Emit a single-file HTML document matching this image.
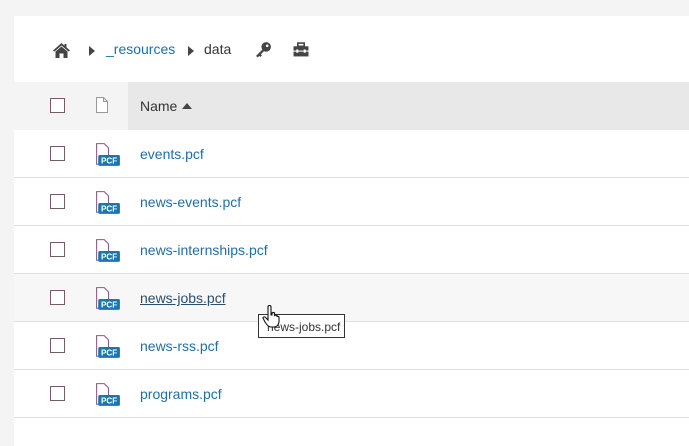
<!DOCTYPE html>
<html><head><style>
body{margin:0;background:#f4f4f4;font-family:"Liberation Sans",sans-serif;width:689px;height:435px;overflow:hidden;position:relative}
.card{position:absolute;left:14px;top:16px;width:700px;height:430px;background:#fff}
.bc{position:absolute;top:29px;left:38px;font-size:14px;color:#333;height:18px}
.bc *{position:absolute;white-space:nowrap}
.hdr{position:absolute;left:0;top:66px;width:700px;height:48px;background:#f4f4f4}
.hdr .n{position:absolute;left:114px;top:0;right:0;height:48px;background:#e8e8e8}
.row{position:absolute;left:0;width:700px;height:47px;border-bottom:1px solid #e0e0e0}
.cb{position:absolute;left:36px;top:16px;width:13px;height:13px;border:1px solid #7a5a6a;background:#fff}
.lnk{position:absolute;left:126px;top:16px;font-size:14px;color:#1f6fa3}
.ic{position:absolute;left:81px;top:13px}
</style></head><body>
<div class="card">
<div class="bc">
<svg style="left:0;top:-3px" width="19" height="17" viewBox="0 0 19 17"><path d="M9.5 1 L1 8.5 L2.5 9.5 L9.5 3.5 L16.5 9.5 L18 8.5 L14.5 5.4 V2 H12.5 V3.7Z M3.5 9.5 V16 H7.5 V11.5 H11.5 V16 H15.5 V9.5 L9.5 4.5Z" fill="#444"/></svg>
<svg style="left:37px;top:1px" width="6" height="10"><path d="M0 0 L6 5 L0 10Z" fill="#444"/></svg>
<span style="left:54px;top:-4px;color:#1f6fa3">_resources</span>
<svg style="left:136px;top:1px" width="6" height="10"><path d="M0 0 L6 5 L0 10Z" fill="#444"/></svg>
<span style="left:152px;top:-4px">data</span>
<svg style="left:203px;top:-4px" width="17" height="17" viewBox="0 0 16 16"><circle cx="10.5" cy="5.5" r="4.5" fill="#444"/><path d="M8 7 L1 14 L2.5 15.5 L4 14 L5 15 L6.5 13.5 L5.5 12.5 L10 8Z" fill="#444"/><circle cx="11.5" cy="4.5" r="1.2" fill="#fff"/></svg>
<svg style="left:241px;top:-3px" width="16" height="15" viewBox="0 0 15 14"><rect x="4.5" y="1" width="6" height="3" fill="none" stroke="#444" stroke-width="1.5"/><rect x="0.5" y="4" width="14" height="4" fill="#444"/><rect x="0.5" y="9" width="14" height="4.5" fill="#444"/><rect x="3" y="7" width="2" height="3" fill="#fff"/><rect x="10" y="7" width="2" height="3" fill="#fff"/></svg>
</div>
<div class="hdr"><div class="n"></div>
<div class="cb" style="top:16px"></div>
<svg style="position:absolute;left:82px;top:15px" width="12" height="16" viewBox="0 0 12 16"><path d="M0.5 0.5 H7.5 L11.5 4.5 V15.5 H0.5Z M7.5 0.5 V4.5 H11.5" fill="#fff" stroke="#999"/></svg>
<span style="position:absolute;left:126px;top:16px;font-size:14px;color:#333">Name</span>
<svg style="position:absolute;left:168px;top:21px" width="10" height="6"><path d="M0 6 L5 0 L10 6Z" fill="#444"/></svg>
</div>
</div>
<div style="position:absolute;left:14px;top:130px">
<div class="row" style="top:0"><div class="cb"></div><svg class="ic" width="26" height="24" viewBox="0 0 24 22"><path d="M1.5 0.5 H8.5 L12.5 4.5 V19.5 H1.5Z" fill="#fff" stroke="#8a5a8a"/><rect x="3" y="11" width="20" height="10" rx="1.5" fill="#1877b3"/><text x="13" y="19" font-size="7.5" font-weight="bold" fill="#fff" text-anchor="middle" font-family="Liberation Sans">PCF</text></svg><span class="lnk">events.pcf</span></div>
<div class="row" style="top:48px"><div class="cb"></div><svg class="ic" width="26" height="24" viewBox="0 0 24 22"><path d="M1.5 0.5 H8.5 L12.5 4.5 V19.5 H1.5Z" fill="#fff" stroke="#8a5a8a"/><rect x="3" y="11" width="20" height="10" rx="1.5" fill="#1877b3"/><text x="13" y="19" font-size="7.5" font-weight="bold" fill="#fff" text-anchor="middle" font-family="Liberation Sans">PCF</text></svg><span class="lnk">news-events.pcf</span></div>
<div class="row" style="top:96px"><div class="cb"></div><svg class="ic" width="26" height="24" viewBox="0 0 24 22"><path d="M1.5 0.5 H8.5 L12.5 4.5 V19.5 H1.5Z" fill="#fff" stroke="#8a5a8a"/><rect x="3" y="11" width="20" height="10" rx="1.5" fill="#1877b3"/><text x="13" y="19" font-size="7.5" font-weight="bold" fill="#fff" text-anchor="middle" font-family="Liberation Sans">PCF</text></svg><span class="lnk">news-internships.pcf</span></div>
<div class="row" style="top:144px;background:#f7f7f7"><div class="cb"></div><svg class="ic" width="26" height="24" viewBox="0 0 24 22"><path d="M1.5 0.5 H8.5 L12.5 4.5 V19.5 H1.5Z" fill="#fff" stroke="#8a5a8a"/><rect x="3" y="11" width="20" height="10" rx="1.5" fill="#1877b3"/><text x="13" y="19" font-size="7.5" font-weight="bold" fill="#fff" text-anchor="middle" font-family="Liberation Sans">PCF</text></svg><span class="lnk" style="color:#2a4f6e;text-decoration:underline">news-jobs.pcf</span></div>
<div class="row" style="top:192px"><div class="cb"></div><svg class="ic" width="26" height="24" viewBox="0 0 24 22"><path d="M1.5 0.5 H8.5 L12.5 4.5 V19.5 H1.5Z" fill="#fff" stroke="#8a5a8a"/><rect x="3" y="11" width="20" height="10" rx="1.5" fill="#1877b3"/><text x="13" y="19" font-size="7.5" font-weight="bold" fill="#fff" text-anchor="middle" font-family="Liberation Sans">PCF</text></svg><span class="lnk">news-rss.pcf</span></div>
<div class="row" style="top:240px"><div class="cb"></div><svg class="ic" width="26" height="24" viewBox="0 0 24 22"><path d="M1.5 0.5 H8.5 L12.5 4.5 V19.5 H1.5Z" fill="#fff" stroke="#8a5a8a"/><rect x="3" y="11" width="20" height="10" rx="1.5" fill="#1877b3"/><text x="13" y="19" font-size="7.5" font-weight="bold" fill="#fff" text-anchor="middle" font-family="Liberation Sans">PCF</text></svg><span class="lnk">programs.pcf</span></div>
</div>
<div style="position:absolute;left:258px;top:314px;width:87px;height:24px;border:1px solid #333;background:#fff;font-size:12px;color:#333;line-height:24px;box-sizing:border-box;padding-left:8px">news-jobs.pcf</div>
<svg style="position:absolute;left:262px;top:305px" width="20" height="24" viewBox="0 0 20 24"><path d="M6 2 Q6 0.5 7.5 0.5 Q9 0.5 9 2 V10 L10 10 V8 Q11.5 7 12.5 8 V10.5 Q14 9.5 15 10.5 V11.5 Q16.5 11 17 12 V17 Q16 22 12 22 H9 Q6 22 3 17 L1 13 Q1 11.5 3 12 L6 15Z" fill="#fff" stroke="#111" stroke-width="1.1"/></svg>
</body></html>
